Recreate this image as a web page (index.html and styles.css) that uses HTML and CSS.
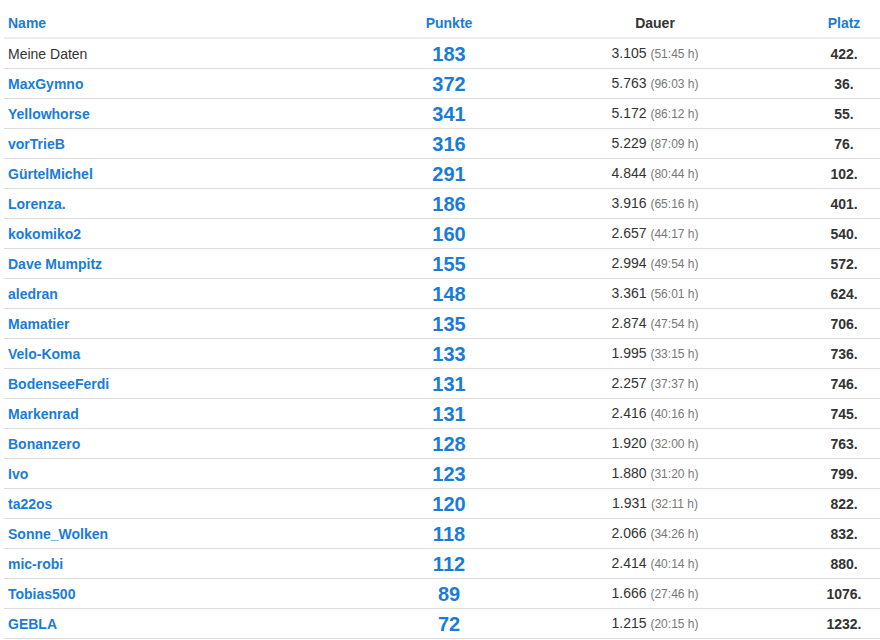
FILE: index.html
```html
<!DOCTYPE html>
<html lang="de">
<head>
<meta charset="utf-8">
<link rel="stylesheet" href="styles.css">
</head>
<body>
<table class="rank">
  <colgroup>
    <col class="c-name"><col class="c-pts"><col class="c-dur"><col class="c-pl">
  </colgroup>
  <thead>
    <tr>
      <th class="h-name link">Name</th>
      <th class="h-center link">Punkte</th>
      <th class="h-center">Dauer</th>
      <th class="h-center link">Platz</th>
    </tr>
  </thead>
  <tbody>
    <tr><td class="name me">Meine Daten</td><td class="pts">183</td><td class="dur">3.105 <small>(51:45 h)</small></td><td class="pl">422.</td></tr>
    <tr><td class="name">MaxGymno</td><td class="pts">372</td><td class="dur">5.763 <small>(96:03 h)</small></td><td class="pl">36.</td></tr>
    <tr><td class="name">Yellowhorse</td><td class="pts">341</td><td class="dur">5.172 <small>(86:12 h)</small></td><td class="pl">55.</td></tr>
    <tr><td class="name">vorTrieB</td><td class="pts">316</td><td class="dur">5.229 <small>(87:09 h)</small></td><td class="pl">76.</td></tr>
    <tr><td class="name">GürtelMichel</td><td class="pts">291</td><td class="dur">4.844 <small>(80:44 h)</small></td><td class="pl">102.</td></tr>
    <tr><td class="name">Lorenza.</td><td class="pts">186</td><td class="dur">3.916 <small>(65:16 h)</small></td><td class="pl">401.</td></tr>
    <tr><td class="name">kokomiko2</td><td class="pts">160</td><td class="dur">2.657 <small>(44:17 h)</small></td><td class="pl">540.</td></tr>
    <tr><td class="name">Dave Mumpitz</td><td class="pts">155</td><td class="dur">2.994 <small>(49:54 h)</small></td><td class="pl">572.</td></tr>
    <tr><td class="name">aledran</td><td class="pts">148</td><td class="dur">3.361 <small>(56:01 h)</small></td><td class="pl">624.</td></tr>
    <tr><td class="name">Mamatier</td><td class="pts">135</td><td class="dur">2.874 <small>(47:54 h)</small></td><td class="pl">706.</td></tr>
    <tr><td class="name">Velo-Koma</td><td class="pts">133</td><td class="dur">1.995 <small>(33:15 h)</small></td><td class="pl">736.</td></tr>
    <tr><td class="name">BodenseeFerdi</td><td class="pts">131</td><td class="dur">2.257 <small>(37:37 h)</small></td><td class="pl">746.</td></tr>
    <tr><td class="name">Markenrad</td><td class="pts">131</td><td class="dur">2.416 <small>(40:16 h)</small></td><td class="pl">745.</td></tr>
    <tr><td class="name">Bonanzero</td><td class="pts">128</td><td class="dur">1.920 <small>(32:00 h)</small></td><td class="pl">763.</td></tr>
    <tr><td class="name">Ivo</td><td class="pts">123</td><td class="dur">1.880 <small>(31:20 h)</small></td><td class="pl">799.</td></tr>
    <tr><td class="name">ta22os</td><td class="pts">120</td><td class="dur">1.931 <small>(32:11 h)</small></td><td class="pl">822.</td></tr>
    <tr><td class="name">Sonne_Wolken</td><td class="pts">118</td><td class="dur">2.066 <small>(34:26 h)</small></td><td class="pl">832.</td></tr>
    <tr><td class="name">mic-robi</td><td class="pts">112</td><td class="dur">2.414 <small>(40:14 h)</small></td><td class="pl">880.</td></tr>
    <tr><td class="name">Tobias500</td><td class="pts">89</td><td class="dur">1.666 <small>(27:46 h)</small></td><td class="pl">1076.</td></tr>
    <tr><td class="name">GEBLA</td><td class="pts">72</td><td class="dur">1.215 <small>(20:15 h)</small></td><td class="pl">1232.</td></tr>
  </tbody>
</table>
</body>
</html>
```
FILE: styles.css
```css
html, body {
  margin: 0;
  padding: 0;
  background: #fff;
}
body {
  padding-left: 4px;
  font-family: "Liberation Sans", Arial, Helvetica, sans-serif;
  font-size: 14px;
  color: #333;
}
.rank {
  width: 876px;
  border-collapse: collapse;
  table-layout: fixed;
}
.c-name { width: 392px; }
.c-pts { width: 106px; }
.c-dur { width: 306px; }
.c-pl { width: 72px; }

.rank th {
  padding: 15px 4px 6px;
  line-height: 16px;
  font-weight: bold;
  font-size: 14px;
  color: #333;
  border-bottom: 2px solid #ececec;
}
.rank th.h-name { text-align: left; }
.rank th.h-center { text-align: center; }
.rank th.link { color: #1a7cd9; }

.rank td {
  height: 29px;
  padding: 0 4px;
  line-height: 20px;
  vertical-align: middle;
  border-bottom: 1px solid #dcdcdc;
}
.name {
  font-weight: bold;
  color: #1a7cd9;
}
.name.me {
  font-weight: normal;
  color: #333;
}
.pts {
  text-align: center;
  font-size: 20px;
  font-weight: bold;
  color: #1a7cd9;
}
.dur {
  text-align: center;
  color: #333;
}
.dur small {
  font-size: 12px;
  color: #777;
}
.pl {
  text-align: center;
  font-weight: bold;
  color: #333;
}
```
